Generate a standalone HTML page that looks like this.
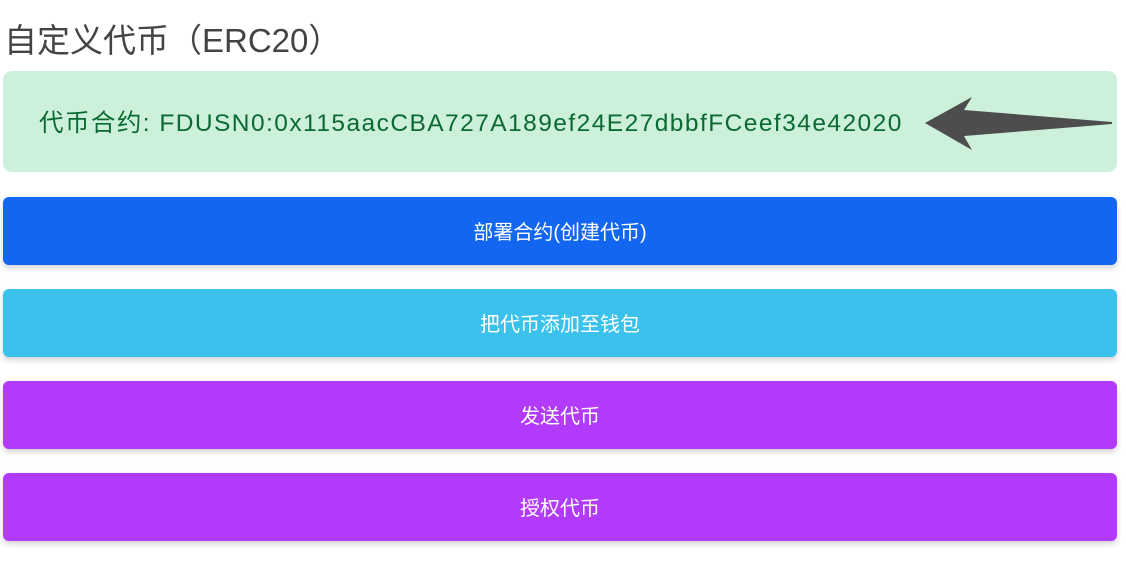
<!DOCTYPE html>
<html><head><meta charset="utf-8"><style>
body{margin:0;width:1126px;height:565px;background:#fff;font-family:"Liberation Sans","Noto Sans CJK SC",sans-serif;position:relative;overflow:hidden}
h1{position:absolute;left:4px;top:19px;margin:0;font-size:33px;font-weight:normal;color:#444;line-height:44px}
.panel{position:absolute;left:3px;top:71px;width:1114px;height:101px;background:#cdf0db;border-radius:9px}
.panel span{position:absolute;left:36px;top:38px;font-size:24.5px;letter-spacing:1.45px;color:#0a6a32;line-height:30px;white-space:nowrap}
.btn{position:absolute;left:3px;width:1114px;height:68px;border-radius:6px;color:#fff;font-size:20px;text-align:center;line-height:72px;box-shadow:0 3px 6px rgba(0,0,0,.18)}
svg{position:absolute;left:0;top:0}
</style></head><body>
<h1>自定义代币（ERC20）</h1>
<div class="panel"><span>代币合约: FDUSN0:0x115aacCBA727A189ef24E27dbbfFCeef34e42020</span></div>
<svg width="1126" height="565"><path d="M925 123 L972 97 L964 110 L1112 122 L1112 124 L964 136 L972 150 Z" fill="#4d4d4d"/></svg>
<div class="btn" style="top:197px;background:#1366f0">部署合约(创建代币)</div>
<div class="btn" style="top:289px;background:#3ac1ec">把代币添加至钱包</div>
<div class="btn" style="top:381px;background:#b23bfb">发送代币</div>
<div class="btn" style="top:473px;background:#b23bfb">授权代币</div>
</body></html>
